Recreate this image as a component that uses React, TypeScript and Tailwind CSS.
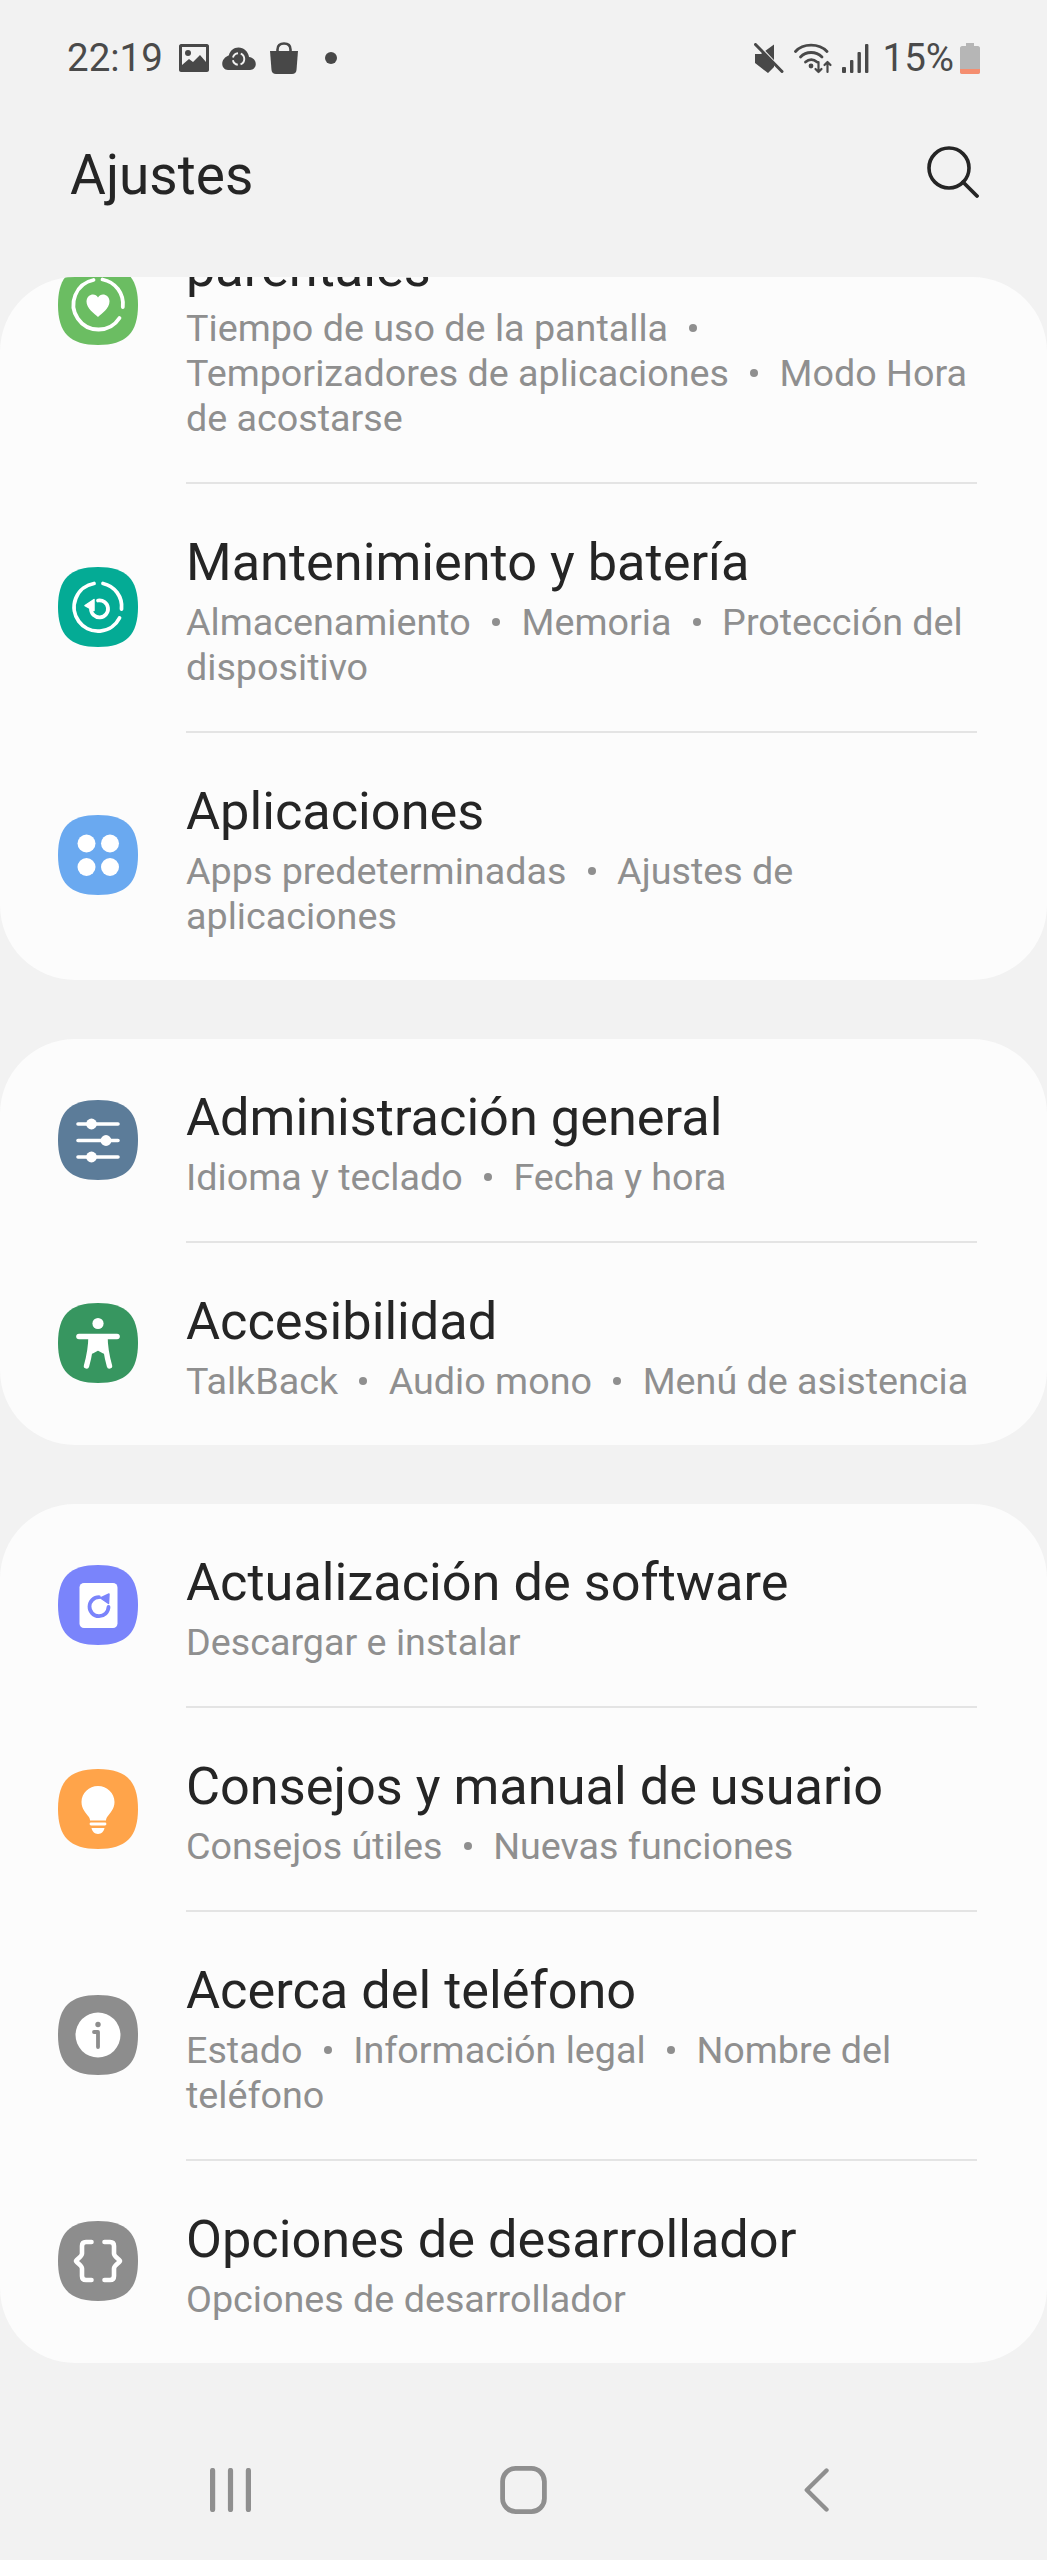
import React from "react";

const SQUIRCLE = "M40 0C68 0 80 12 80 40C80 68 68 80 40 80C12 80 0 68 0 40C0 12 12 0 40 0Z";

function Glyph({ color, children }: { color: string; children: React.ReactNode }) {
  return (
    <svg width="80" height="80" viewBox="0 0 80 80" className="shrink-0 mb-[3px]">
      <path d={SQUIRCLE} fill={color} />
      {children}
    </svg>
  );
}

const white = { fill: "none", stroke: "#fff", strokeLinecap: "round" as const, strokeLinejoin: "round" as const };

const icons: Record<string, React.ReactNode> = {
  parental: (
    <Glyph color="#6bbd62">
      <g {...white} strokeWidth="3.8">
        <path d="M44.5 14.5A25 25 0 0 1 64.8 42" />
        <path d="M61.5 53A25 25 0 1 1 35.5 15" />
      </g>
      <path d="M40 52C36 48 28.5 43.5 28.5 36.5C28.5 32 32 29.5 35 29.5C37 29.5 39 30.5 40 32.5C41 30.5 43 29.5 45 29.5C48 29.5 51.5 32 51.5 36.5C51.5 43.5 44 48 40 52Z" fill="#fff" />
    </Glyph>
  ),
  care: (
    <Glyph color="#04ab95">
      <g {...white} strokeWidth="3.8">
        <path d="M45 16.5A23.5 23.5 0 0 1 63.5 42" />
        <path d="M61.5 51A24 24 0 1 1 36 16.5" />
        <path d="M40 33.5A8.5 8.5 0 1 1 33 42" />
      </g>
      <path d="M27 38.5L36 32.5V43.5Z" fill="#fff" stroke="#fff" strokeWidth="1.5" strokeLinejoin="round" />
    </Glyph>
  ),
  apps: (
    <Glyph color="#6aa9f0">
      <circle cx="28.5" cy="28.5" r="9" fill="#fff" />
      <circle cx="52" cy="28.5" r="9" fill="#fff" />
      <circle cx="28.5" cy="52" r="9" fill="#fff" />
      <circle cx="52" cy="52" r="9" fill="#fff" />
    </Glyph>
  ),
  general: (
    <Glyph color="#5c7c99">
      <g {...white} strokeWidth="3.6">
        <path d="M20 24H60M20 40.5H60M20 57H60" />
      </g>
      <circle cx="33.5" cy="24" r="5.4" fill="#fff" />
      <circle cx="48" cy="40.5" r="5.4" fill="#fff" />
      <circle cx="33.5" cy="57" r="5.4" fill="#fff" />
    </Glyph>
  ),
  access: (
    <Glyph color="#379660">
      <circle cx="40" cy="20.5" r="5.6" fill="#fff" />
      <path d="M21 33.5H59" {...white} strokeWidth="5.6" />
      <path d="M33 34C33 46 31 54 28.5 63M47 34C47 46 49 54 51.5 63M33 36L47 36M33 42L47 42M33.5 48L40 44.5L46.5 48" {...white} strokeWidth="5.4" />
      <path d="M33 34H47L46 46L40 45L34 46Z" fill="#fff" />
    </Glyph>
  ),
  update: (
    <Glyph color="#7a84fb">
      <rect x="21.5" y="18" width="38" height="45" rx="4.5" fill="#fff" />
      <path d="M50.5 42A9.5 9.5 0 1 1 41 32.2" fill="none" stroke="#7a84fb" strokeWidth="3.8" strokeLinecap="round" />
      <path d="M42.5 33L51 29L50.5 38.5Z" fill="#7a84fb" stroke="#7a84fb" strokeWidth="1.5" strokeLinejoin="round" />
    </Glyph>
  ),
  tips: (
    <Glyph color="#ffa44a">
      <path d="M40 17C49 17 56.5 24 56.5 33C56.5 40 52 44 49.5 47.5C48.5 49 48 50 48 51.5H32C32 50 31.5 49 30.5 47.5C28 44 23.5 40 23.5 33C23.5 24 31 17 40 17Z" fill="#fff" />
      <path d="M33 55H47" {...white} strokeWidth="2.8" />
      <path d="M33.5 59H46.5C46 62 43.5 65 40 65C36.5 65 34 62 33.5 59Z" fill="#fff" />
    </Glyph>
  ),
  about: (
    <Glyph color="#8d8d8d">
      <circle cx="40" cy="40" r="22.5" fill="#fff" />
      <circle cx="40" cy="29.5" r="2.7" fill="#8d8d8d" />
      <path d="M36 37H40V52" fill="none" stroke="#8d8d8d" strokeWidth="3.8" strokeLinecap="round" strokeLinejoin="round" />
    </Glyph>
  ),
  dev: (
    <Glyph color="#8d8d8d">
      <g {...white} strokeWidth="4.6">
        <path d="M33.5 21H28C25.5 21 24 22.5 24 25V32.5C24 35.5 19.5 37.5 18 40C19.5 42.5 24 44.5 24 47.5V55C24 57.5 25.5 59 28 59H33.5" />
        <path d="M46.5 21H52C54.5 21 56 22.5 56 25V32.5C56 35.5 60.5 37.5 62 40C60.5 42.5 56 44.5 56 47.5V55C56 57.5 54.5 59 52 59H46.5" />
      </g>
    </Glyph>
  ),
};

function Sub({ parts }: { parts: string[] }) {
  return (
    <p className="text-[37.7px] leading-[45px] text-[#8f8f8f] mt-[7px]">
      {parts.map((p, i) => (
        <React.Fragment key={i}>
          {p}
          {i < parts.length - 1 && (
            <>
              {" "}
              <span className="inline-block mx-[12px] w-[8px] h-[8px] rounded-full bg-[#8f8f8f] align-[9px]" />{" "}
            </>
          )}
        </React.Fragment>
      ))}
    </p>
  );
}

type RowData = { icon: string; title: string; parts: string[] };

function Row({ row, last }: { row: RowData; last: boolean }) {
  return (
    <div className="flex items-center pl-[58px] pr-[70px] gap-[48px]">
      {icons[row.icon]}
      <div
        className={
          last
            ? "flex-1 min-w-0 pt-[47px] pb-[41px]"
            : "flex-1 min-w-0 pt-[47px] pb-[41px] border-b-[2px] border-[#e4e4e4]"
        }
      >
        <h2 className="text-[52.3px] leading-[62px] text-[#252525] font-normal">{row.title}</h2>
        <Sub parts={row.parts} />
      </div>
    </div>
  );
}

function Card({ rows, clip }: { rows: RowData[]; clip?: boolean }) {
  return (
    <section className="bg-[#fcfcfc] rounded-[75px] overflow-hidden">
      <div className={clip ? "-mt-[149px]" : ""}>
        {rows.map((r, i) => (
          <Row key={r.icon} row={r} last={i === rows.length - 1} />
        ))}
      </div>
    </section>
  );
}

function StatusLeft() {
  const c = "#484848";
  return (
    <div className="flex items-center">
      <span className="text-[38.5px] leading-[46px] text-[#4a4a4a]">22:19</span>
      <svg width="30" height="30" viewBox="0 0 30 30" className="ml-[16px]">
        <path fillRule="evenodd" d="M2 1H28C29 1 30 2 30 3V27C30 28 29 29 28 29H2C1 29 0 28 0 27V3C0 2 1 1 2 1ZM3 4V22L10 16L14 19L21 12L27 19V4Z" fill={c} />
        <circle cx="9" cy="10" r="3" fill={c} />
      </svg>
      <svg width="34" height="23" viewBox="0 0 35 24" className="ml-[13px]">
        <path d="M28 10.5C27 4.5 22.5 0.5 17 0.5C12 0.5 8 4 7 8.5C3 10 0 13.5 0 17.5C0 21 2.5 24 6 24H29C32.5 24 35 21 35 18C35 14 32 11 28 10.5Z" fill={c} />
        <circle cx="17" cy="12.5" r="6" fill="none" stroke="#f2f2f2" strokeWidth="2" strokeDasharray="7 3" />
      </svg>
      <svg width="30" height="32" viewBox="0 0 30 32" className="ml-[13px]">
        <path d="M1 9H29L27.5 28C27.3 30.5 25.5 32 23 32H7C4.5 32 2.7 30.5 2.5 28Z" fill={c} />
        <path d="M8.5 12V7.5C8.5 3.5 11 1.5 15 1.5C19 1.5 21.5 3.5 21.5 7.5V12" fill="none" stroke={c} strokeWidth="2.6" />
      </svg>
      <span className="ml-[26px] w-[12px] h-[12px] rounded-full bg-[#484848]" />
    </div>
  );
}

function StatusRight() {
  const c = "#484848";
  return (
    <div className="flex items-center">
      <svg width="30" height="30" viewBox="0 0 30 30">
        <path d="M1 11H7L20 1.5V24L14 30L1 20Z" fill={c} />
        <path d="M3 1L30 30" stroke="#f2f2f2" strokeWidth="3" />
        <path d="M1.5 1.5L28 28.5" stroke={c} strokeWidth="3" strokeLinecap="round" />
      </svg>
      <svg width="40" height="32" viewBox="0 0 40 32" className="ml-[10px]">
        <g fill="none" stroke={c} strokeWidth="2.8" strokeLinecap="round">
          <path d="M1.5 9.5C9 1 25 1 33 9.5" />
          <path d="M6.5 15C12 9 22 9 28 15" />
          <path d="M11.5 20C15 17 19.5 17 23 20" />
        </g>
        <circle cx="17" cy="24" r="2.4" fill={c} />
        <g fill="none" stroke={c} strokeWidth="2.2" strokeLinecap="round" strokeLinejoin="round">
          <path d="M24.5 20V30M21.5 27L24.5 30L27.5 27" />
          <path d="M33.5 30V20M30.5 23L33.5 20L36.5 23" />
        </g>
      </svg>
      <svg width="27" height="29" viewBox="0 0 27 29" className="ml-[8px]">
        <rect x="0" y="23" width="4" height="6" rx="1" fill={c} />
        <rect x="8" y="16" width="3.4" height="13" rx="1" fill={c} />
        <rect x="15.5" y="8" width="3.4" height="21" rx="1" fill={c} />
        <rect x="23" y="0" width="3.4" height="29" rx="1" fill={c} />
      </svg>
      <span className="ml-[14px] text-[38.5px] leading-[46px] text-[#4a4a4a]">15%</span>
      <svg width="20" height="31" viewBox="0 0 20 31" className="ml-[6px]">
        <path d="M6 0H14V3H18C19 3 20 4 20 5V29C20 30 19 31 18 31H2C1 31 0 30 0 29V5C0 4 1 3 2 3H6Z" fill="#b6b6b6" />
        <path d="M0 26H20V29C20 30 19 31 18 31H2C1 31 0 30 0 29Z" fill="#f58e70" />
      </svg>
    </div>
  );
}

const card1: RowData[] = [
  {
    icon: "parental",
    title: "Bienestar digital y controles parentales",
    parts: ["Tiempo de uso de la pantalla", "Temporizadores de aplicaciones", "Modo Hora de acostarse"],
  },
  { icon: "care", title: "Mantenimiento y batería", parts: ["Almacenamiento", "Memoria", "Protección del dispositivo"] },
  { icon: "apps", title: "Aplicaciones", parts: ["Apps predeterminadas", "Ajustes de aplicaciones"] },
];
const card2: RowData[] = [
  { icon: "general", title: "Administración general", parts: ["Idioma y teclado", "Fecha y hora"] },
  { icon: "access", title: "Accesibilidad", parts: ["TalkBack", "Audio mono", "Menú de asistencia"] },
];
const card3: RowData[] = [
  { icon: "update", title: "Actualización de software", parts: ["Descargar e instalar"] },
  { icon: "tips", title: "Consejos y manual de usuario", parts: ["Consejos útiles", "Nuevas funciones"] },
  { icon: "about", title: "Acerca del teléfono", parts: ["Estado", "Información legal", "Nombre del teléfono"] },
  { icon: "dev", title: "Opciones de desarrollador", parts: ["Opciones de desarrollador"] },
];

export default function App() {
  return (
    <div className="flex flex-col w-[1047px] h-[2560px] overflow-hidden bg-[#f2f2f2] font-['Roboto',sans-serif]">
      <div className="flex items-center justify-between h-[116px] pl-[67px] pr-[67px] shrink-0">
        <StatusLeft />
        <StatusRight />
      </div>
      <header className="flex items-start justify-between h-[161px] pl-[70px] pr-[68px] shrink-0">
        <h1 className="mt-[23px] text-[55px] leading-[72px] text-[#252525] font-normal">Ajustes</h1>
        <svg width="52" height="52" viewBox="0 0 52 52" className="mt-[30px]">
          <circle cx="22" cy="22" r="20" fill="none" stroke="#252525" strokeWidth="3.6" />
          <path d="M36 36L50 50" stroke="#252525" strokeWidth="3.8" strokeLinecap="round" />
        </svg>
      </header>
      <main className="flex flex-col gap-[59px]">
        <Card rows={card1} clip />
        <Card rows={card2} />
        <Card rows={card3} />
      </main>
      <nav className="mt-auto h-[140px] shrink-0 ml-[84px] w-[879px] grid grid-cols-3 items-center justify-items-center">
        <svg width="41" height="44" viewBox="0 0 41 44">
          <path d="M2.6 2.5V41.5M20.5 2.5V41.5M38.4 2.5V41.5" stroke="#8f8f8f" strokeWidth="5.2" strokeLinecap="round" />
        </svg>
        <svg width="47" height="48" viewBox="0 0 47 48">
          <rect x="2.6" y="2.4" width="41.8" height="43.2" rx="13" fill="none" stroke="#8f8f8f" strokeWidth="4.8" />
        </svg>
        <svg width="25" height="44" viewBox="0 0 25 44">
          <path d="M22.5 2.5L2.8 22L22.5 41.5" fill="none" stroke="#8f8f8f" strokeWidth="4.4" strokeLinecap="round" strokeLinejoin="round" />
        </svg>
      </nav>
    </div>
  );
}
